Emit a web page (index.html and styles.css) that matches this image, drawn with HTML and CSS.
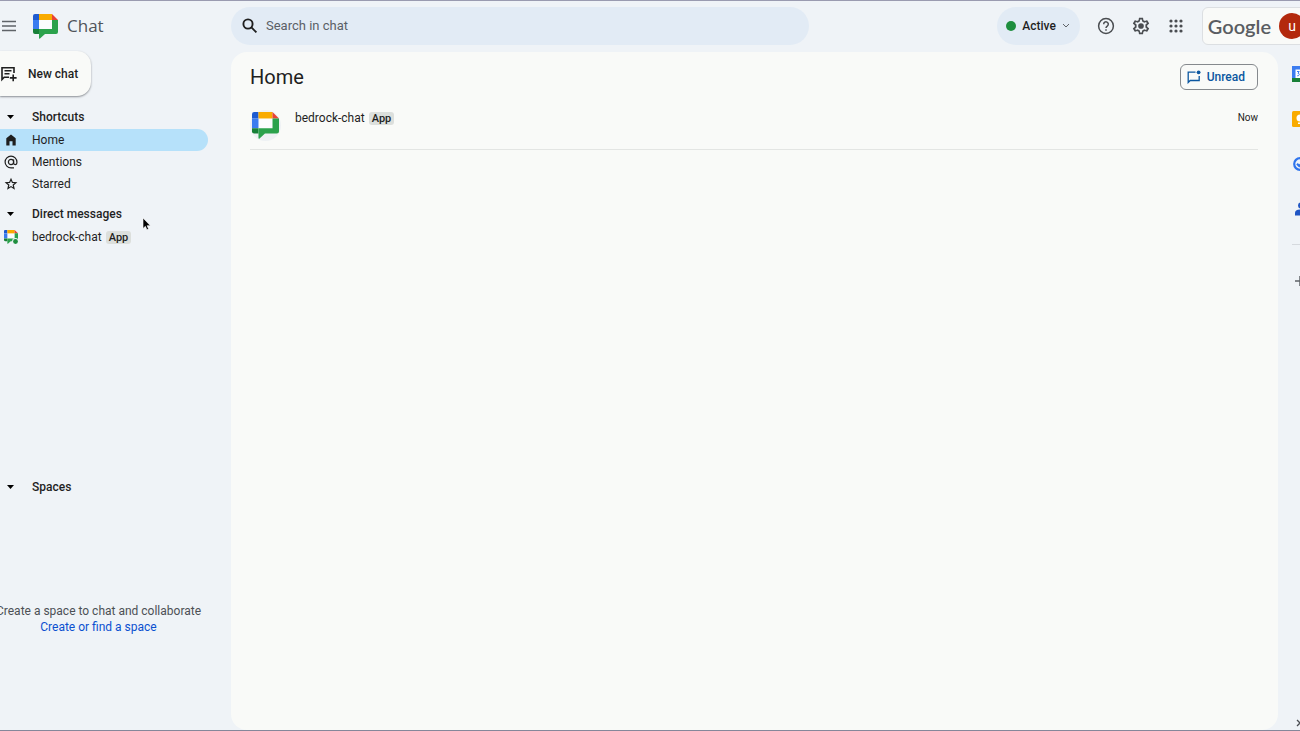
FILE: index.html
```html
<!DOCTYPE html>
<html lang="en">
<head>
<meta charset="utf-8">
<title>Chat</title>
<link rel="stylesheet" href="styles.css">
</head>
<body>
<svg class="defs" aria-hidden="true">
  <symbol id="chat-logo" viewBox="0 0 25 25">
    <path fill="#fbfcfd" d="M5 5h15v11H5z"/>
    <path fill="#1f5bd0" d="M2 0h4v6H0V2a2 2 0 0 1 2-2z"/>
    <path fill="#f9ab00" d="M6 0h13v6H6z"/>
    <path fill="#e94235" d="M19 0l6 6h-6z"/>
    <path fill="#3b7cf0" d="M0 6h6v9H0z"/>
    <path fill="#188038" d="M0 15h6v5H2a2 2 0 0 1-2-2z"/>
    <path fill="#2ba24c" d="M19 6h6v12a2 2 0 0 1-2 2H12l-5 4.600a.6.6 0 0 1-1-.5V15h13z"/>
  </symbol>
</svg>

<header class="topbar">
  <div class="brand">
    <button class="icon-button menu" aria-label="Main menu">
      <svg width="14" height="12" viewBox="0 0 14 12"><path d="M0 1.500h14M0 6h14M0 10.500h14" stroke="#5f6368" stroke-width="1.500"/></svg>
    </button>
    <svg class="brand-logo" width="25" height="25"><use href="#chat-logo"/></svg>
    <span class="brand-name">Chat</span>
  </div>
  <form class="search" role="search">
    <svg width="16" height="16" viewBox="0 0 16 16" fill="none" stroke="#1f1f1f" stroke-width="1.900"><circle cx="6" cy="6" r="4.600"/><path d="M9.400 9.400l5 5"/></svg>
    <input type="search" aria-label="Search in chat" placeholder="Search in chat">
  </form>
  <div class="tools">
    <button class="status">
      <span class="status-dot"></span>Active
      <svg width="8" height="6" viewBox="0 0 8 6" fill="none" stroke="#5f6368"><path d="M1 1l3 3 3-3"/></svg>
    </button>
    <button class="icon-button" aria-label="Support">
      <svg width="18" height="18" viewBox="0 0 18 18" fill="none" stroke="#4a4d51" stroke-width="1.500"><circle cx="9" cy="9" r="7.400"/><path d="M6.700 7.200a2.300 2.300 0 1 1 3.700 1.800C9.500 9.700 9 10 9 11"/><path d="M9 12.300v1.500"/></svg>
    </button>
    <button class="icon-button" aria-label="Settings">
      <svg width="20" height="20" viewBox="0 0 24 24" fill="#4a4d51"><path d="M19.430 12.980c.04-.32.070-.64.070-.98s-.03-.66-.07-.98l2.110-1.650c.19-.15.240-.42.120-.64l-2-3.460c-.12-.22-.39-.3-.61-.22l-2.490 1c-.52-.4-1.080-.73-1.690-.98l-.38-2.650C14.460 2.180 14.250 2 14 2h-4c-.25 0-.46.18-.49.420l-.38 2.650c-.61.250-1.170.59-1.690.98l-2.490-1c-.23-.09-.49 0-.61.220l-2 3.460c-.13.220-.07.490.120.640l2.110 1.650c-.04.320-.07.650-.07.980s.03.660.070.980l-2.110 1.650c-.19.150-.24.420-.12.640l2 3.460c.12.220.39.300.61.220l2.490-1c.52.400 1.080.730 1.690.980l.38 2.650c.03.240.24.420.49.420h4c.25 0 .46-.18.490-.42l.38-2.650c.61-.25 1.170-.59 1.690-.98l2.490 1c.23.090.49 0 .61-.22l2-3.460c.12-.22.070-.49-.12-.64zM17.300 13.700l1.800 1.500-1 1.700-2.200-.9-2.500 1.500-.4 2.400h-2l-.4-2.400-2.500-1.500-2.200.9-1-1.700 1.800-1.500v-3.400L4.900 8.800l1-1.700 2.200.9 2.500-1.500.4-2.400h2l.4 2.400 2.500 1.500 2.200-.9 1 1.700-1.800 1.500z" fill-rule="evenodd"/><circle cx="12" cy="12" r="3.400"/></svg>
    </button>
    <button class="icon-button" aria-label="Google apps">
      <svg width="14" height="14" viewBox="0 0 14 14" fill="#4a4d51"><circle cx="2" cy="2" r="1.600"/><circle cx="7" cy="2" r="1.600"/><circle cx="12" cy="2" r="1.600"/><circle cx="2" cy="7" r="1.600"/><circle cx="7" cy="7" r="1.600"/><circle cx="12" cy="7" r="1.600"/><circle cx="2" cy="12" r="1.600"/><circle cx="7" cy="12" r="1.600"/><circle cx="12" cy="12" r="1.600"/></svg>
    </button>
    <button class="account">
      <span class="account-brand">Google</span>
      <span class="avatar">u</span>
    </button>
  </div>
</header>

<div class="workspace">
  <nav class="sidebar">
    <button class="new-chat">
      <svg width="16" height="16" viewBox="0 0 16 16" fill="none" stroke="#1f1f1f" stroke-width="1.600"><path d="M13 7V1.800H1V13.500L3.200 11.300H8M3.500 4.700h7M3.500 7.800h5M12.200 8.500v6.800M8.800 11.900h6.800"/></svg>
      New chat
    </button>
    <section class="group">
      <h2 class="group-title"><svg class="caret" width="7" height="4" viewBox="0 0 7 4"><path d="M0 0h7L3.500 4z"/></svg>Shortcuts</h2>
      <a class="item item-current" href="#home"><svg width="14" height="14" viewBox="0 0 14 14"><path fill="#1f1f1f" d="M2.300 5.300L7 1.500l4.700 3.800v7.200H8.500V8.300h-3v4.200H2.300z"/></svg>Home</a>
      <a class="item" href="#mentions"><svg width="14" height="14" viewBox="0 0 14 14" fill="none" stroke="#1f1f1f" stroke-width="1.200"><circle cx="7" cy="7" r="2.600"/><path d="M9.600 4.500V8a1.600 1.600 0 0 0 3.300-.2V7A5.900 5.900 0 1 0 7 12.900h3"/></svg>Mentions</a>
      <a class="item" href="#starred"><svg width="14" height="14" viewBox="0 0 14 14" fill="none" stroke="#1f1f1f" stroke-width="1.200"><path d="M7 2.200l1.400 3.200 3.500.3-2.700 2.300.8 3.400L7 9.600l-3 1.800.8-3.400-2.700-2.300 3.500-.3z"/></svg>Starred</a>
    </section>
    <section class="group group-messages">
      <h2 class="group-title"><svg class="caret" width="7" height="4" viewBox="0 0 7 4"><path d="M0 0h7L3.500 4z"/></svg>Direct messages</h2>
      <a class="item" href="#bedrock-chat">
        <svg width="14" height="14" viewBox="0 0 14 14"><use href="#chat-logo" width="14" height="14"/><circle cx="11.500" cy="11.500" r="3.400" fill="#edf2f8"/><circle cx="11.500" cy="11.500" r="2.400" fill="#1e8e3e"/></svg>
        <span class="chat-name">bedrock-chat <span class="tag">App</span></span>
      </a>
    </section>
    <section class="group group-spaces">
      <h2 class="group-title"><svg class="caret" width="7" height="4" viewBox="0 0 7 4"><path d="M0 0h7L3.500 4z"/></svg>Spaces</h2>
      <div class="empty">
        <p>Create a space to chat and collaborate</p>
        <a href="#spaces">Create or find a space</a>
      </div>
    </section>
  </nav>

  <main class="panel">
    <div class="panel-head">
      <h1>Home</h1>
      <button class="unread">
        <svg width="14" height="14" viewBox="0 0 14 14" fill="none" stroke="#0b57a0" stroke-width="1.300"><path d="M8.500 2.200H1.200v10.300l2-2h9V6"/><circle cx="11.600" cy="2.300" r="1.900" fill="#0b57a0" stroke="none"/></svg>
        Unread
      </button>
    </div>
    <a class="conversation" href="#bedrock-chat">
      <span class="conversation-icon"><svg width="27" height="27"><use href="#chat-logo"/></svg></span>
      <span class="chat-name">bedrock-chat <span class="tag">App</span></span>
      <time>Now</time>
    </a>
  </main>

  <aside class="rail">
    <button aria-label="Calendar"><svg width="16" height="16" viewBox="0 0 16 16"><path fill="#3b7cf0" d="M0 0h16v13H0z"/><path fill="#188038" d="M0 12h16v4H0z"/><path fill="#fff" d="M3.500 3.500h9V12h-9z"/><path d="M5 5.500h2.200L6 7.300c1.800 0 1.800 2.700-.8 2.500" fill="none" stroke="#3b7cf0"/></svg></button>
    <button aria-label="Keep"><svg width="16" height="16" viewBox="0 0 16 16"><rect width="16" height="16" rx="1.500" fill="#f9ab00"/><circle cx="8" cy="7" r="3.500" fill="#fff"/><path fill="#fff" d="M6 11.500h4v1.500H6z"/></svg></button>
    <button aria-label="Tasks"><svg width="16" height="14" viewBox="-1 0 16 14" fill="none" stroke="#2f74ec" stroke-width="2.200"><circle cx="7" cy="7" r="5.800"/><path d="M4 6.800l2.200 2.200L11 4"/></svg></button>
    <button aria-label="Contacts"><svg width="16" height="14" viewBox="-3 0 16 14" fill="#1f55c4"><circle cx="6" cy="3.500" r="3"/><path d="M0 13.500v-2.700C0 8.700 1.800 7.500 6 7.500s6 1.200 6 3.300v2.700z"/></svg></button>
    <hr>
    <button class="rail-add" aria-label="Get add-ons"><svg width="16" height="10" viewBox="-3 0 16 10"><path d="M5 0v10M0 5h10" stroke="#5f6368" stroke-width="1.500"/></svg></button>
    <button class="rail-toggle" aria-label="Hide side panel"><svg width="6" height="8" viewBox="0 0 6 8" fill="none" stroke="#4a4d51" stroke-width="1.300"><path d="M1 1l3 3-3 3"/></svg></button>
  </aside>
</div>

<svg class="pointer" width="9" height="14" viewBox="0 0 9 14" aria-hidden="true"><path d="M1 1v10.500l2.400-2.200 1.500 3.500 1.700-.7-1.500-3.400h3.300z" fill="#000" stroke="#fff" stroke-width=".6"/></svg>
</body>
</html>
```
FILE: styles.css
```css
* {
  box-sizing: border-box;
}

body {
  margin: 0;
  min-height: 100vh;
  display: flex;
  flex-direction: column;
  overflow: hidden;
  border-top: 1px solid #9a9bb0;
  border-bottom: 1px solid #85879a;
  background: #eff3f7;
  color: #1f1f1f;
  font: 12px/16px Roboto, "Liberation Sans", sans-serif;
}

button,
input {
  border: 0;
  padding: 0;
  background: none;
  color: inherit;
  font: inherit;
}

a {
  color: inherit;
  text-decoration: none;
}

h1,
h2,
p {
  margin: 0;
}

svg {
  display: block;
  flex: none;
}

.defs {
  position: absolute;
  width: 0;
  height: 0;
}

.topbar {
  flex: none;
  display: flex;
  align-items: center;
  height: 50px;
}

.brand {
  flex: none;
  width: 231px;
  display: flex;
  align-items: center;
  padding-left: 2px;
}

.brand-logo {
  margin: 0 9px 0 17px;
}

.brand-name {
  color: #50545a;
  font: 17px/24px "Open Sans", sans-serif;
}

.search {
  flex: 0 1 578px;
  height: 38px;
  display: flex;
  align-items: center;
  gap: 8px;
  padding: 0 11px;
  border-radius: 19px;
  background: #e2ebf5;
}

.search input {
  flex: 1;
  min-width: 0;
  outline: 0;
  font-size: 13px;
}

.search input::placeholder {
  color: #5b5f66;
  opacity: 1;
}

.tools {
  flex: none;
  margin-left: auto;
  display: flex;
  align-items: center;
  margin-right: -8px;
}

.tools .icon-button {
  width: 35px;
  height: 35px;
  display: grid;
  place-items: center;
}

.status {
  height: 38px;
  display: flex;
  align-items: center;
  gap: 6px;
  padding: 0 10px 0 9px;
  margin-right: 9px;
  border-radius: 19px;
  background: #e2ebf5;
  font-weight: 500;
}

.status-dot {
  width: 10px;
  height: 10px;
  border-radius: 50%;
  background: #1e8e3e;
}

.account {
  height: 38px;
  display: flex;
  align-items: center;
  gap: 8px;
  margin-left: 8px;
  padding: 0 2px 0 5px;
  border: 1px solid #dcdfe2;
  border-radius: 6px;
  background: #f9faf8;
}

.account-brand {
  color: #5a5d62;
  font: 600 20px/24px Lato, sans-serif;
}

.avatar {
  width: 26px;
  height: 26px;
  border-radius: 50%;
  background: #b3290d;
  color: #fff;
  font-size: 14px;
  line-height: 26px;
}

.workspace {
  flex: 1;
  display: flex;
}

.sidebar {
  flex: none;
  width: 231px;
  display: flex;
  flex-direction: column;
}

.new-chat {
  align-self: flex-start;
  height: 45px;
  display: flex;
  align-items: center;
  gap: 11px;
  padding: 0 13px 0 1px;
  margin-bottom: 9px;
  border-radius: 0 14px 14px 0;
  background: #f9faf8;
  box-shadow: 0 1px 2px rgba(40, 44, 52, 0.5);
  font-weight: 500;
}

.group-messages {
  flex: 274 0 0;
  margin-top: 7px;
}

.group-spaces {
  flex: 255 0 0;
  display: flex;
  flex-direction: column;
}

.group-title {
  height: 24px;
  display: flex;
  align-items: center;
  font-size: 12px;
  font-weight: 500;
}

.caret {
  margin: 0 18px 0 7px;
}

.item {
  height: 22px;
  display: flex;
  align-items: center;
  gap: 14px;
  padding-left: 4px;
  margin-right: 23px;
}

.item-current {
  border-radius: 0 11px 11px 0;
  background: #b6e1fa;
}

.chat-name {
  display: flex;
  align-items: center;
  gap: 4px;
}

.tag {
  padding: 0 3px;
  border-radius: 3px;
  background: #dcdfdc;
  font-size: 11px;
  line-height: 13px;
  font-weight: 500;
}

.empty {
  flex: 1;
  display: flex;
  flex-direction: column;
  align-items: center;
  justify-content: center;
  padding: 8px 34px 0 0;
  white-space: nowrap;
  color: #4c5055;
}

.empty a {
  color: #0b50d0;
}

.panel {
  flex: 1;
  min-width: 0;
  padding: 12px 20px 0 19px;
  margin-top: 1px;
  border-radius: 16px;
  background: #f9faf8;
}

.panel-head {
  display: flex;
  align-items: center;
  justify-content: space-between;
}

.panel-head h1 {
  font-size: 20px;
  font-weight: 400;
  line-height: 24px;
}

.unread {
  height: 26px;
  display: flex;
  align-items: center;
  gap: 6px;
  padding: 0 12px 0 6px;
  border: 1px solid #85898d;
  border-radius: 6px;
  color: #0b57a0;
  font-weight: 500;
}

.conversation {
  display: flex;
  align-items: flex-start;
  padding: 20px 0 8px;
  border-bottom: 1px solid #e3e5e3;
}

.conversation-icon {
  width: 31px;
  height: 31px;
  display: grid;
  place-items: center;
  margin-right: 14px;
  border-radius: 50%;
  background: #eef1f4;
}

.conversation time {
  margin-left: auto;
  font-size: 10px;
}

.rail {
  flex: none;
  width: 22px;
  display: flex;
  flex-direction: column;
  align-items: flex-start;
  padding-left: 14px;
  overflow: hidden;
}

.rail button {
  height: 45px;
  display: flex;
  align-items: center;
}

.rail hr {
  width: 100%;
  margin: 13px 0;
  border: 0;
  border-top: 1px solid #d5d9de;
}

.rail .rail-toggle {
  height: 14px;
  margin: auto 0 0 4px;
}

.pointer {
  position: absolute;
  left: 142px;
  top: 217px;
}
```
